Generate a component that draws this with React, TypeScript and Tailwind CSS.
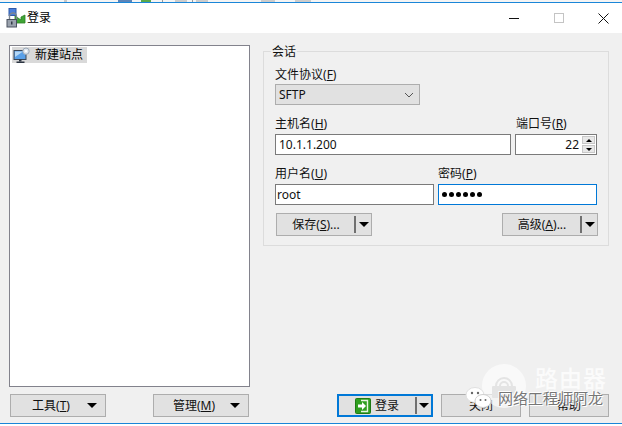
const font = { fontFamily: '"Noto Sans", "Noto Sans CJK SC", sans-serif' };

function Label({ text, k, className = "" }: { text: string; k: string; className?: string }) {
  return (
    <div className={"h-[14px] leading-[14px] text-[12px] text-[#111] whitespace-nowrap " + className}>
      {text}(<span className="underline">{k}</span>)
    </div>
  );
}

function Caret({ className = "" }: { className?: string }) {
  return <span className={"block w-0 h-0 border-l-[5px] border-r-[5px] border-t-[5px] border-l-transparent border-r-transparent border-t-black " + className} />;
}

function SplitButton({ text, k, suffix = "", className = "" }: { text: string; k: string; suffix?: string; className?: string }) {
  return (
    <div className={"w-[96px] h-[23px] border border-[#adadad] bg-[#e1e1e1] flex items-center text-[12px] text-[#111] " + className}>
      <div className="flex-1 text-center whitespace-nowrap pl-[1px]">
        {text}(<span className="underline">{k}</span>){suffix}
      </div>
      <div className="w-[17px] h-[17px] border-l-2 border-[#707070] flex items-center justify-center">
        <Caret className="ml-[1px]" />
      </div>
    </div>
  );
}

function MenuButton({ text, k }: { text: string; k: string }) {
  return (
    <div className="w-[96px] h-[23px] border border-[#adadad] bg-[#e1e1e1] flex items-center text-[12px] text-[#111]">
      <div className="flex-1 text-center whitespace-nowrap pl-[4px]">
        {text}(<span className="underline">{k}</span>)
      </div>
      <Caret className="mr-[8px]" />
    </div>
  );
}

function AppIcon() {
  return (
    <svg width="20" height="20" viewBox="0 0 20 20" className="shrink-0">
      <rect x="3" y="0.5" width="7" height="7" fill="#4a7fdc" stroke="#2f5aa8" />
      <path d="M9 8 L15 12 V9 L19 7 V15 H9Z" fill="#3fa535" stroke="#2b7d24" strokeWidth="0.8" />
      <path d="M6 12 V8.5 a3.5 3.5 0 0 1 7 0 V12" transform="translate(-2.5 0)" fill="none" stroke="#7d8692" strokeWidth="1.4" />
      <rect x="1" y="11.5" width="9.5" height="7.5" fill="#9aa2ad" stroke="#4a5260" />
      <rect x="5" y="13.5" width="1.5" height="3" fill="#333b48" />
    </svg>
  );
}

function SiteIcon() {
  return (
    <svg width="18" height="17" viewBox="0 0 18 17" className="shrink-0">
      <rect x="1" y="3.5" width="12" height="9" fill="#5aa0e8" stroke="#3a4656" />
      <path d="M2 4.5 H10 L2 10Z" fill="#b6d8f6" />
      <rect x="6" y="12.5" width="2.5" height="2" fill="#2c3542" />
      <rect x="3.5" y="14.5" width="8" height="1.5" fill="#2c3542" />
      <circle cx="13" cy="4.2" r="3.2" fill="#dfe6ee" stroke="#9aa7b6" />
      <circle cx="13" cy="4.2" r="1.1" fill="#ffffff" />
    </svg>
  );
}

function LoginIcon() {
  return (
    <svg width="16" height="16" viewBox="0 0 16 16" className="shrink-0">
      <rect x="0.5" y="0.5" width="15" height="15" rx="1" fill="#2f9e1f" stroke="#1f7a14" />
      <path d="M6 2.5 H12.5 V13.5 H6" fill="none" stroke="#e8f5e0" strokeWidth="1.4" />
      <path d="M3 6.5 H7 V4 L11 8 L7 12 V9.5 H3Z" fill="#ffffff" />
    </svg>
  );
}

function Field({ value, className = "" }: { value: string; className?: string }) {
  return (
    <div className={"h-[21px] border border-[#7a7a7a] bg-white flex items-center text-[12px] text-[#111] " + className}>
      {value}
    </div>
  );
}

export default function App() {
  return (
    <div className="relative w-[622px] h-[426px] overflow-hidden bg-white flex flex-col" style={font}>
      <div className="h-[2px] bg-[#f4f4f4] flex shrink-0">
        <div className="ml-[64px] w-[3px] bg-[#c8c8c8]" />
        <div className="ml-[51px] w-[14px] bg-[#5b84b8]" />
        <div className="ml-[9px] w-[10px] bg-[#5aa84a]" />
        <div className="ml-[11px] w-[1px] bg-[#999]" />
        <div className="ml-[12px] w-[12px] bg-[#ccc]" />
        <div className="ml-[5px] w-[1px] bg-[#999]" />
        <div className="ml-[3px] w-[12px] bg-[#ccc]" />
        <div className="ml-[53px] w-[14px] bg-[#ccc]" />
        <div className="ml-[20px] w-[16px] bg-[#ccc]" />
      </div>
      <div className="h-[1px] bg-[#1a86d8] shrink-0" />

      <div className="h-[30px] shrink-0 bg-white flex items-center pl-[6px]">
        <AppIcon />
        <span className="ml-[1px] text-[12px] text-black">登录</span>
        <div className="ml-auto flex items-center">
          <div className="w-[10px] h-[1px] bg-[#111] mr-[35px]" />
          <div className="w-[10px] h-[10px] border border-[#c4c4c4] mr-[34px]" />
          <svg width="11" height="11" viewBox="0 0 11 11" className="mr-[13px]">
            <path d="M0.5 0.5 L10.5 10.5 M10.5 0.5 L0.5 10.5" stroke="#111" strokeWidth="1" />
          </svg>
        </div>
      </div>

      <div className="flex-1 bg-[#f0f0f0] flex flex-col pl-[9px] pr-[13px] pt-[12px] min-h-0">
        <div className="flex items-start">
          <div className="w-[241px] h-[342px] border border-[#82828c] bg-white p-[1px] pl-[2px] shrink-0">
            <div className="w-[75px] h-[16px] bg-[#d9d9d9] flex items-center text-[12px] text-black pl-[1px]">
              <SiteIcon />
              <span className="ml-[4px]">新建站点</span>
            </div>
          </div>

          <div className="ml-[13px] w-[346px] mt-[6px] h-[195px] border border-[#dcdcdc] relative px-[11px] pt-[16px]">
            <div className="absolute left-[7px] top-[-7px] h-[14px] leading-[14px] text-[12px] text-[#111] bg-[#f0f0f0] pl-[1px] pr-[1px]">会话</div>
            <Label text="文件协议" k="F" />
            <div className="w-[145px] h-[21px] mt-[2px] border border-[#adadad] bg-[#e1e1e1] flex items-center justify-between pl-[3px] pr-[4px] text-[12px] text-[#111]">
              <span>SFTP</span>
              <svg width="10" height="6" viewBox="0 0 10 6" className="mr-[1px]">
                <path d="M1 1 L5 5 L9 1" fill="none" stroke="#555" strokeWidth="1" />
              </svg>
            </div>

            <div className="flex mt-[12px]">
              <div className="w-[242px]">
                <Label text="主机名" k="H" />
                <Field value="10.1.1.200" className="w-[236px] mt-[3px] pl-[3px]" />
              </div>
              <div>
                <Label text="端口号" k="R" className="ml-[1px]" />
                <div className="w-[82px] h-[21px] mt-[3px] border border-[#7a7a7a] bg-white flex items-center justify-end text-[12px] text-[#111] pr-[1px]">
                  <span className="mr-[3px]">22</span>
                  <div className="flex flex-col gap-[1px]">
                    <div className="w-[13px] h-[8px] bg-[#e8e8e8] border border-[#c8c8c8] flex items-center justify-center">
                      <span className="block w-0 h-0 border-l-[3px] border-r-[3px] border-b-[3px] border-l-transparent border-r-transparent border-b-black" />
                    </div>
                    <div className="w-[13px] h-[8px] bg-[#e8e8e8] border border-[#c8c8c8] flex items-center justify-center">
                      <span className="block w-0 h-0 border-l-[3px] border-r-[3px] border-t-[3px] border-l-transparent border-r-transparent border-t-black" />
                    </div>
                  </div>
                </div>
              </div>
            </div>

            <div className="flex mt-[12px]">
              <div className="w-[165px]">
                <Label text="用户名" k="U" />
                <Field value="root" className="w-[159px] mt-[3px] pl-[1px]" />
              </div>
              <div>
                <Label text="密码" k="P" />
                <div className="w-[159px] h-[21px] mt-[3px] border border-[#0078d7] bg-white flex items-center gap-[2px] pl-[3px]">
                  {[0, 1, 2, 3, 4, 5].map((i) => (
                    <span key={i} className="block w-[5px] h-[5px] rounded-full bg-black" />
                  ))}
                </div>
              </div>
            </div>

            <div className="flex justify-between mt-[8px] ml-[1px] w-[322px]">
              <SplitButton text="保存" k="S" suffix="..." />
              <SplitButton text="高级" k="A" suffix="..." />
            </div>
          </div>
        </div>

        <div className="flex mt-[7px] items-start">
          <div className="ml-[1px]"><MenuButton text="工具" k="T" /></div>
          <div className="ml-[47px]"><MenuButton text="管理" k="M" /></div>
          <div className="ml-[88px] w-[96px] h-[23px] border-2 border-[#0078d7] bg-[#e1e1e1] flex items-center text-[12px] text-[#111]">
            <div className="flex-1 flex items-center justify-center gap-[4px]">
              <LoginIcon />
              <span>登录</span>
            </div>
            <div className="w-[16px] h-[17px] border-l-2 border-[#707070] flex items-center justify-center">
              <Caret />
            </div>
          </div>
          <div className="ml-[8px] w-[80px] h-[23px] border border-[#adadad] bg-[#e1e1e1] flex items-center justify-center text-[12px] text-[#111]">关闭</div>
          <div className="ml-[8px] w-[80px] h-[23px] border border-[#adadad] bg-[#e1e1e1] flex items-center justify-center text-[12px] text-[#111]">帮助</div>
        </div>
      </div>

      <div className="h-[1px] bg-[#1a86d8] shrink-0" />
      <div className="h-[2px] bg-white shrink-0" />

      <div className="absolute left-[482px] top-[364px] w-[44px] h-[44px] rounded-full bg-white/60" />
      <svg className="absolute left-[490px] top-[372px]" width="28" height="28" viewBox="0 0 28 28">
        <path d="M6 14 a8 8 0 0 1 16 0 M10 14 a4 4 0 0 1 8 0" fill="none" stroke="#e4e4e4" strokeWidth="2" />
        <rect x="2" y="14" width="24" height="12" rx="1" fill="#e4e4e4" />
      </svg>
      <div className="absolute left-[535px] top-[364px] text-[23px] leading-[28px] tracking-[1px] text-white/75 whitespace-nowrap font-medium">路由器</div>
      <svg className="absolute left-[465px] top-[386px]" width="28" height="24" viewBox="0 0 28 24">
        <ellipse cx="10" cy="9" rx="9" ry="7.5" fill="#ffffff" stroke="#e0e0e0" />
        <ellipse cx="18" cy="15" rx="8" ry="6.5" fill="#ffffff" stroke="#cfcfcf" />
        <circle cx="7" cy="7" r="1.2" fill="#666" />
        <circle cx="13" cy="7" r="1.2" fill="#666" />
        <circle cx="15.5" cy="14" r="1" fill="#666" />
        <circle cx="20.5" cy="14" r="1" fill="#666" />
      </svg>
      <div className="absolute left-[498px] top-[388px] text-[15px] leading-[20px] text-[#777] whitespace-nowrap [text-shadow:1px_1px_0_#fff,-1px_-1px_0_#fff]">网络工程师阿龙</div>
    </div>
  );
}
